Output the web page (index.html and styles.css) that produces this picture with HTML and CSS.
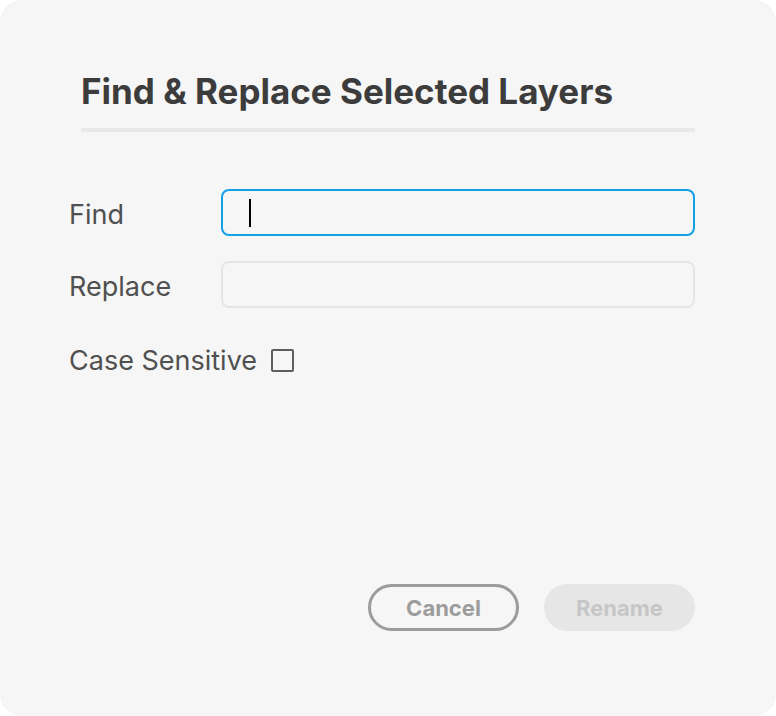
FILE: index.html
```html
<!DOCTYPE html>
<html lang="en">

<head>
    <meta charset="UTF-8">
    <meta name="viewport" content="width=device-width, initial-scale=1.0">
    <title>Find &amp; Replace Selected Layers</title>
    <link rel="stylesheet" href="styles.css">
</head>

<body>
    <div class="dialog">
        <div class="header">
            <h1>Find &amp; Replace Selected Layers</h1>
            <div class="rule"></div>
        </div>
        <div class="form">
            <div class="row">
                <label for="find">Find</label>
                <div class="field focused"><span class="caret"></span></div>
            </div>
            <div class="row">
                <label for="replace">Replace</label>
                <div class="field"></div>
            </div>
            <div class="check">
                <span>Case Sensitive</span>
                <span class="box"></span>
            </div>
        </div>
        <div class="actions">
            <button class="cancel">Cancel</button>
            <button class="rename" disabled>Rename</button>
        </div>
    </div>
</body>

</html>
```

FILE: styles.css
```css
html, body {
    margin: 0;
    background-color: #ffffff;
}
body {
    font-family: Inter, "Noto Sans", sans-serif;
}
.dialog {
    width: 776px;
    height: 716px;
    box-sizing: border-box;
    background-color: #f6f6f6;
    border-radius: 22px;
    padding: 69px 81px 0 69px;
    display: flex;
    flex-direction: column;
}

.header {
    padding-left: 12px;
}
h1 {
    margin: 0;
    font-size: 35px;
    line-height: 44px;
    font-weight: 700;
    color: #3c3c3c;
}
.rule {
    margin-top: 15px;
    height: 4px;
    border-radius: 2px;
    background-color: #e8e8e8;
}

.form {
    margin-top: 57px;
}
.row {
    display: flex;
    align-items: center;
    margin-bottom: 25px;
}
.row label, .check span:first-child {
    width: 152px;
    padding-top: 3px;
    font-size: 27px;
    color: #505050;
}
.field {
    flex: 1;
    height: 47px;
    box-sizing: border-box;
    border: 2px solid #e5e5e5;
    border-radius: 8px;
    display: flex;
    align-items: center;
    padding-left: 26px;
}
.field.focused {
    border-color: #12a0e6;
}
.caret {
    width: 2px;
    height: 28px;
    background-color: #000;
}

.check {
    display: flex;
    align-items: center;
    gap: 14px;
    margin-top: 36px;
}
.check span:first-child {
    width: auto;
    padding-top: 0;
}
.box {
    width: 23px;
    height: 23px;
    box-sizing: border-box;
    border: 2px solid #5e5e5e;
    border-radius: 2px;
}

.actions {
    margin-top: auto;
    margin-bottom: 85px;
    display: flex;
    justify-content: flex-end;
    gap: 25px;
}
button {
    width: 151px;
    height: 47px;
    border-radius: 24px;
    font-family: Inter, "Noto Sans", sans-serif;
    font-size: 22px;
    font-weight: 700;
}
.cancel {
    background-color: transparent;
    border: 3px solid #9c9c9c;
    color: #9c9c9c;
}
.rename {
    background-color: #e6e6e6;
    border: none;
    color: #c6c6c6;
}
```
